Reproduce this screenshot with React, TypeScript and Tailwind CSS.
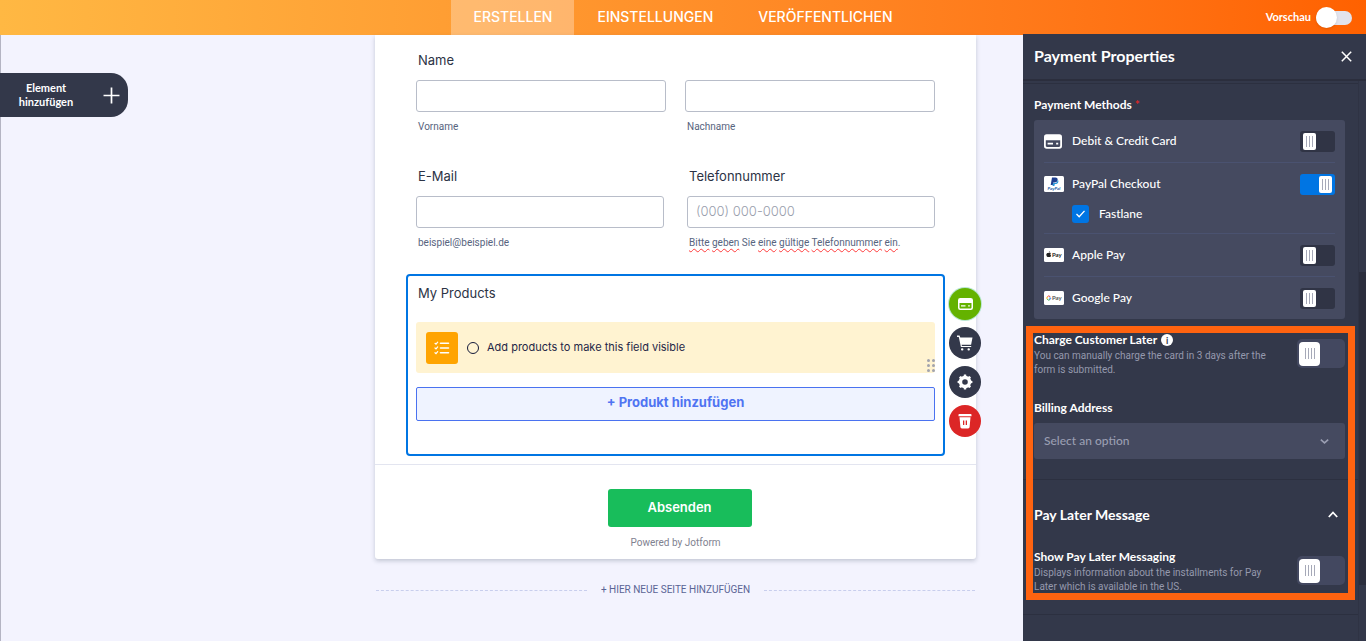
import { useState, type ReactNode } from "react";

function CardIcon({ className }: { className: string }) {
  return (
    <svg viewBox="0 0 20 16" className={className} aria-hidden="true">
      <path
        fill="currentColor"
        fillRule="evenodd"
        d="M3 0h14a3 3 0 0 1 3 3v10a3 3 0 0 1-3 3H3a3 3 0 0 1-3-3V3a3 3 0 0 1 3-3zM2 6.5v6.2c0 .7.5 1.3 1.300 1.300h13.400c.7 0 1.300-.6 1.300-1.300V6.500zM4 9.500h6v1.800H4zM13.500 9.500h2.300v1.800h-2.300z"
      />
    </svg>
  );
}

function CartIcon() {
  return (
    <svg viewBox="0 0 16 16" className="size-4" aria-hidden="true">
      <path fill="currentColor" d="M0 .5h2.500l.8 1.900H15.500l-1.400 7.300H4.600l.3 1.200h9.300v1H3.900L1.800 1.900H0z" />
      <rect x="4" y="13.200" width="2.400" height="2.200" rx="1" fill="currentColor" />
      <rect x="10.500" y="13.200" width="2.400" height="2.200" rx="1" fill="currentColor" />
    </svg>
  );
}

function GearIcon() {
  return (
    <svg viewBox="0 0 16 16" className="size-4" aria-hidden="true">
      <g fill="currentColor">
        <path
          fillRule="evenodd"
          d="M8 1.800a6.200 6.200 0 1 1 0 12.400A6.200 6.200 0 0 1 8 1.800zm0 3.400a2.800 2.800 0 1 0 0 5.600 2.800 2.800 0 0 0 0-5.600z"
        />
        {[0, 45, 90, 135, 180, 225, 270, 315].map((angle) => (
          <path key={angle} d="M6.400 3 6.900.6h2.200L9.600 3z" transform={`rotate(${angle} 8 8)`} />
        ))}
      </g>
    </svg>
  );
}

function TrashIcon() {
  return (
    <svg viewBox="0 0 14 16" className="h-4 w-[14px]" aria-hidden="true">
      <path fill="currentColor" d="M1.500 1h11c.6 0 1 .4 1 1v1.200H.5V2c0-.6.4-1 1-1z" />
      <path
        fill="currentColor"
        fillRule="evenodd"
        d="M1.500 4.200h11l-.9 9.800c-.1.800-.7 1.400-1.500 1.400H3.900c-.8 0-1.400-.6-1.500-1.400zM5 7.500v4.600h1.300V7.500zm2.700 0v4.600H9V7.500z"
      />
    </svg>
  );
}

function ChecklistIcon() {
  return (
    <svg viewBox="0 0 16 14" className="h-[14px] w-4" fill="none" stroke="currentColor" aria-hidden="true">
      <path strokeWidth="1.600" strokeLinecap="round" d="M6.500 2.300h8M6.500 7h8M6.500 11.700h8" />
      <path strokeWidth="1.200" strokeLinecap="round" d="m1 2.300 1 .9 1.700-2M1 7l1 .9 1.700-2M1 11.700l1 .9 1.700-2" />
    </svg>
  );
}

function PayPalBadge() {
  return (
    <svg viewBox="0 0 20 16" className="h-4 w-5" aria-hidden="true">
      <rect width="20" height="16" rx="1.500" fill="#fff" />
      <path fill="#1f3f8f" d="M8 1.500h3.400c1.700 0 2.500 1 2.200 2.500-.3 1.700-1.500 2.500-3.100 2.500H9.300L8.800 9H6.700z" />
      <path fill="#2997d8" d="M13.700 3.800c.7.5.8 1.300.6 2.100-.3 1.500-1.400 2.100-2.900 2.100h-.6l-.4 2.100H8.500l.7-3h1.500c1.700 0 2.800-1.200 3-3.200z" />
      <text x="10" y="14" textAnchor="middle" fontSize="4.500" fontWeight="700" fontStyle="italic" fill="#1b5ea8">
        PayPal
      </text>
    </svg>
  );
}

function ApplePayBadge() {
  return (
    <svg viewBox="0 0 20 14" className="h-[14px] w-5" aria-hidden="true">
      <rect width="20" height="14" rx="1.500" fill="#fff" />
      <path
        fill="#222"
        d="M5.200 5c.5-.3 1.200-.3 1.700.2-.8.600-.7 1.800.2 2.200-.3.900-.8 1.700-1.400 1.700-.4 0-.6-.2-1-.2s-.6.200-1 .2c-.8 0-1.500-1.600-1.400-2.700.1-1 .9-1.600 1.700-1.500.5 0 .8.300 1.200.1zM4.700 4.600c0-.8.500-1.300 1.200-1.400 0 .8-.5 1.300-1.200 1.400z"
      />
      <text x="8" y="9" fontSize="6" fontWeight="700" fill="#222">
        Pay
      </text>
    </svg>
  );
}

function GooglePayBadge() {
  return (
    <svg viewBox="0 0 20 14" className="h-[14px] w-5" aria-hidden="true">
      <rect width="20" height="14" rx="1.500" fill="#fff" />
      <g fill="none" strokeWidth="1">
        <path stroke="#ea4335" d="M6.300 5.700A2 2 0 0 0 3.200 6" />
        <path stroke="#fbbc05" d="M3.200 6a2 2 0 0 0 0 2.200" />
        <path stroke="#34a853" d="M3.200 8.200a2 2 0 0 0 2.800.4" />
        <path stroke="#4285f4" d="M6 8.600a2 2 0 0 0 .8-1.500H4.900" />
      </g>
      <text x="8" y="9" fontSize="6" fontWeight="700" fill="#555">
        Pay
      </text>
    </svg>
  );
}

function Grip({ bars }: { bars: number }) {
  return (
    <>
      {Array.from({ length: bars }, (_, i) => (
        <span key={i} className="h-[11px] w-px bg-[#a6a9b8]" />
      ))}
    </>
  );
}

function SmallSwitch({ id, defaultOn = false }: { id: string; defaultOn?: boolean }) {
  const [on, setOn] = useState(defaultOn);
  return (
    <span className={`relative flex h-[21px] w-[35px] items-center rounded-[3px] px-[3px] ${on ? "justify-end bg-[#0075e3]" : "justify-start bg-[#303445]"}`}>
      <input id={id} type="checkbox" role="switch" checked={on} onChange={() => setOn(!on)} className="absolute inset-0 cursor-pointer opacity-0" />
      <span className="flex h-[17px] w-[13px] items-center justify-center gap-[2px] rounded-[2px] bg-white">
        <Grip bars={3} />
      </span>
    </span>
  );
}

function LargeSwitch({ id }: { id: string }) {
  const [on, setOn] = useState(false);
  return (
    <span className={`relative flex h-[29px] w-[48px] shrink-0 items-center rounded-[5px] px-[2px] ${on ? "justify-end bg-[#0075e3]" : "justify-start bg-[#434860]"}`}>
      <input id={id} type="checkbox" role="switch" checked={on} onChange={() => setOn(!on)} className="absolute inset-0 cursor-pointer opacity-0" />
      <span className="flex h-6 w-[21px] items-center justify-center gap-[2px] rounded-[4px] bg-white">
        <Grip bars={4} />
      </span>
    </span>
  );
}

function MethodRow({ id, icon, label, on }: { id: string; icon: ReactNode; label: string; on?: boolean }) {
  return (
    <div>
      <div className="flex h-[42px] items-center">
        <span className="flex w-7 shrink-0 items-center">{icon}</span>
        <label htmlFor={id} className="grow text-[12px] font-medium">
          {label}
        </label>
        <SmallSwitch id={id} defaultOn={on} />
      </div>
    </div>
  );
}

function SettingRow({ id, title, text, info }: { id: string; title: string; text: string; info?: boolean }) {
  return (
    <div className="flex items-start justify-between pr-[13px] pl-[11px]">
      <div className="w-[245px]">
        <div className="flex h-4 items-center gap-1">
          <label htmlFor={id} className="text-[12px] leading-4 font-bold">
            {title}
          </label>
          {info && (
            <span className="flex size-3 items-center justify-center rounded-full bg-white text-[9px] leading-none font-bold text-[#33384a]">i</span>
          )}
        </div>
        <p className="pt-px font-['Roboto','Liberation_Sans',sans-serif] text-[10px] leading-[14px] text-[#9599ad]">{text}</p>
      </div>
      <div className="pt-[7px]">
        <LargeSwitch id={id} />
      </div>
    </div>
  );
}

function Field({ id, label, hint, placeholder }: { id: string; label?: string; hint: ReactNode; placeholder?: string }) {
  return (
    <div className="min-w-0 flex-1">
      <label htmlFor={id} className="block h-5 pl-[2px] text-[13px] leading-5 text-[#2c3345]">
        {label}
      </label>
      <input
        id={id}
        placeholder={placeholder}
        aria-label={label ?? "Nachname"}
        className="mt-[10px] block h-8 w-full rounded-[3px] border border-[#b8bdc9] bg-white px-2 pb-[3px] text-[13px] font-light text-[#2c3345] placeholder:text-[#989dac]"
      />
      <p className="mt-[7px] h-4 pl-[2px] font-['Roboto','Liberation_Sans',sans-serif] text-[10px] leading-4 text-[#57647e]">{hint}</p>
    </div>
  );
}

function Misspelt({ children }: { children: string }) {
  return <span className="underline decoration-[#ff3b3b] decoration-wavy decoration-1 underline-offset-2">{children}</span>;
}

function RoundButton({ label, className, children }: { label: string; className: string; children: ReactNode }) {
  return (
    <button type="button" aria-label={label} className={`flex size-8 items-center justify-center rounded-full text-white ${className}`}>
      {children}
    </button>
  );
}

function Header() {
  return (
    <header className="grid h-[35px] grid-cols-[1fr_auto_1fr] bg-linear-to-r from-[#ffb843] to-[#ff6100] text-white">
      <nav className="col-start-2 flex gap-px text-[14px]">
        <a href="#erstellen" className="flex items-center bg-white/30 px-[22px] pb-[2px] font-medium">ERSTELLEN</a>
        <a href="#einstellungen" className="flex items-center px-[22px] pb-[2px] font-medium">EINSTELLUNGEN</a>
        <a href="#veroeffentlichen" className="flex items-center px-[22px] pb-[2px] font-medium">VERÖFFENTLICHEN</a>
      </nav>
      <label className="flex items-center justify-end gap-[5px] pr-[14px] font-['Lato','Liberation_Sans',sans-serif] text-[11px] font-bold">
        Vorschau
        <span className="relative flex h-[21px] w-9 items-center">
          <input type="checkbox" role="switch" className="absolute inset-0 cursor-pointer opacity-0" />
          <span className="flex h-[14px] w-full items-center rounded-full bg-[#e2e3ec]">
            <span className="size-[21px] rounded-full bg-white shadow-sm" />
          </span>
        </span>
      </label>
    </header>
  );
}

function ProductsField() {
  return (
    <section className="relative -mx-[10px] mt-[23px] rounded-[4px] border-2 border-[#0075e3] px-2 pb-[33px]">
      <h2 className="mt-[7px] pl-[2px] text-[13px] leading-5 text-[#2c3345]">My Products</h2>
      <div className="relative mt-[19px] flex h-[51px] items-center rounded-[3px] bg-[#fff3d1] pl-[10px]">
        <span className="flex size-8 items-center justify-center rounded-[3px] bg-[#ffa400] text-white">
          <ChecklistIcon />
        </span>
        <label className="flex items-center text-[11px] text-[#1f2747]">
          <input type="radio" className="mr-2 ml-[9px] size-3 appearance-none rounded-full border border-[#141a3a]" />
          Add products to make this field visible
        </label>
        <svg viewBox="0 0 8 13" className="absolute right-0 bottom-[1px] h-[13px] w-2" fill="#a2a3ad" aria-hidden="true">
          <circle cx="1.500" cy="1.500" r="1.500" />
          <circle cx="6.500" cy="1.500" r="1.500" />
          <circle cx="1.500" cy="6.500" r="1.500" />
          <circle cx="6.500" cy="6.500" r="1.500" />
          <circle cx="1.500" cy="11.500" r="1.500" />
          <circle cx="6.500" cy="11.500" r="1.500" />
        </svg>
      </div>
      <button type="button" className="mt-[14px] block h-[34px] w-full rounded-[2px] border border-[#4a72f0] bg-[#eff3ff] pb-[2px] text-[13px] font-bold text-[#4f74f2]">
        + Produkt hinzufügen
      </button>
      <div className="absolute top-3 left-full ml-[6px] flex flex-col gap-[7px]">
        <RoundButton label="Payment" className="bg-[#64b200] ring-1 ring-[#b8e6d0]">
          <CardIcon className="h-3 w-[15px]" />
        </RoundButton>
        <RoundButton label="Products" className="bg-[#33384a]">
          <CartIcon />
        </RoundButton>
        <RoundButton label="Settings" className="bg-[#33384a]">
          <GearIcon />
        </RoundButton>
        <RoundButton label="Delete" className="bg-[#dc2626]">
          <TrashIcon />
        </RoundButton>
      </div>
    </section>
  );
}

function FormCanvas() {
  return (
    <main className="flex min-w-0 flex-1 items-start justify-between border-l border-[#b4b4c3] bg-[#f3f3fe] pr-[47px]">
      <button type="button" className="-ml-px mt-[38px] flex h-11 w-32 items-center justify-between rounded-r-[17px] bg-[#33384a] pr-2 pl-4 text-white">
        <span className="w-[60px] text-center font-['Lato','Liberation_Sans',sans-serif] text-[11px] leading-[14px] font-bold">Element hinzufügen</span>
        <svg viewBox="0 0 16 16" className="size-[17px]" stroke="currentColor" strokeWidth="1.600" aria-hidden="true">
          <path d="M8 .5v15M.5 8h15" />
        </svg>
      </button>
      <div className="w-full max-w-[601px]">
        <form className="rounded-b-[3px] bg-white shadow-[0_2px_4px_rgba(84,95,111,0.3)]">
          <div className="px-[41px] pt-[15px] pb-2">
            <div className="flex gap-[19px]">
              <Field id="vorname" label="Name" hint="Vorname" />
              <Field id="nachname" hint="Nachname" />
            </div>
            <div className="mt-[31px] flex gap-[23px]">
              <Field id="email" label="E-Mail" hint="beispiel@beispiel.de" />
              <Field
                id="telefon"
                label="Telefonnummer"
                placeholder="(000) 000-0000"
                hint={
                  <>
                    <Misspelt>Bitte</Misspelt> <Misspelt>geben</Misspelt> Sie <Misspelt>eine</Misspelt> <Misspelt>gültige</Misspelt>{" "}
                    <Misspelt>Telefonnummer</Misspelt> <Misspelt>ein</Misspelt>.
                  </>
                }
              />
            </div>
            <ProductsField />
          </div>
          <div className="flex flex-col items-center border-t border-[#e3e5f0] pt-6 pb-2">
            <button type="submit" className="ml-2 h-[38px] w-36 rounded-[3px] bg-[#18bd5b] text-[13px] font-semibold text-white">
              Absenden
            </button>
            <p className="mt-2 font-['Roboto','Liberation_Sans',sans-serif] text-[10px] leading-4 text-[#7f8290]">Powered by Jotform</p>
          </div>
        </form>
        <div className="mt-[23px] flex items-center gap-[14px] px-px text-[#5a6495]">
          <span className="flex-1 border-t border-dashed border-[#c8ceed]" />
          <button type="button" className="font-['Roboto','Liberation_Sans',sans-serif] text-[10px] leading-4">+ HIER NEUE SEITE HINZUFÜGEN</button>
          <span className="flex-1 border-t border-dashed border-[#c8ceed]" />
        </div>
      </div>
    </main>
  );
}

function PaymentPanel() {
  return (
    <aside className="-mt-px flex w-[343px] shrink-0 flex-col bg-[#33384a] font-['Lato','Liberation_Sans',sans-serif] text-white">
      <div className="flex h-[47px] items-center justify-between border-b-2 border-[#2b2e3d] pr-[14px] pl-[11px]">
        <h1 className="pb-[2px] text-[16px] font-bold">Payment Properties</h1>
        <button type="button" aria-label="Close">
          <svg viewBox="0 0 11 11" className="size-[11px]" stroke="currentColor" strokeWidth="1.500" aria-hidden="true">
            <path d="m.8.8 9.400 9.400M10.200.8.8 10.200" />
          </svg>
        </button>
      </div>
      <div className="flex grow">
        <div className="min-w-0 flex-1 pt-[2px]">
          <div className="border-t border-[#2c3040] pt-[13px] pr-[13px] pl-[11px]">
            <h2 className="text-[12px] leading-4 font-bold">
              Payment Methods <span className="text-[#dc2626]">*</span>
            </h2>
            <div className="mt-[7px] divide-y divide-[#4a5270] rounded-[3px] bg-[#454a60] px-[10px]">
              <MethodRow id="card" icon={<CardIcon className="h-[15px] w-[18px]" />} label="Debit & Credit Card" />
              <div>
                <MethodRow id="paypal" icon={<PayPalBadge />} label="PayPal Checkout" on />
                <label className="flex h-7 items-start pl-7 text-[12px] leading-[18px] font-medium">
                  <span className="relative mr-[10px] flex h-[18px] w-[17px] items-center justify-center rounded-[3px] bg-[#0075e3]">
                    <input type="checkbox" defaultChecked className="absolute inset-0 cursor-pointer opacity-0" />
                    <svg viewBox="0 0 12 9" className="h-2 w-[11px]" fill="none" stroke="#fff" strokeWidth="1.500" aria-hidden="true">
                      <path d="m1.500 4.500 3 3 6-6.500" />
                    </svg>
                  </span>
                  Fastlane
                </label>
              </div>
              <MethodRow id="apple" icon={<ApplePayBadge />} label="Apple Pay" />
              <MethodRow id="google" icon={<GooglePayBadge />} label="Google Pay" />
            </div>
          </div>
          <div className="relative mt-[7px] pt-[6px] pb-[6px]">
            <SettingRow id="later" title="Charge Customer Later" text="You can manually charge the card in 3 days after the form is submitted." info />
            <div className="mt-[23px] pr-[13px] pb-5 pl-[11px]">
              <label htmlFor="billing" className="block text-[12px] leading-4 font-bold">
                Billing Address
              </label>
              <div className="relative mt-[7px]">
                <select id="billing" className="block h-9 w-full appearance-none rounded-[3px] bg-[#454a60] px-[10px] text-[12px] font-medium text-[#9a9eb2]">
                  <option>Select an option</option>
                </select>
                <svg viewBox="0 0 9 5" className="pointer-events-none absolute top-4 right-4 h-[5px] w-[9px]" fill="none" stroke="#9a9eb2" strokeWidth="1.600" aria-hidden="true">
                  <path d="m.8.6 3.700 3.300L8.200.6" />
                </svg>
              </div>
            </div>
            <button type="button" className="flex h-[70px] w-full items-center justify-between border-t border-[#2c3040] pr-[20px] pl-[11px]">
              <span className="text-[14px] font-bold">Pay Later Message</span>
              <svg viewBox="0 0 10 7" className="h-[7px] w-[10px]" fill="none" stroke="currentColor" strokeWidth="1.800" aria-hidden="true">
                <path d="M.8 6 5 1.500 9.200 6" />
              </svg>
            </button>
            <SettingRow id="message" title="Show Pay Later Messaging" text="Displays information about the installments for Pay Later which is available in the US." />
            <div className="pointer-events-none absolute inset-y-0 right-[3px] left-[3px] border-[7px] border-[#ff6310]" />
          </div>
          <div className="mt-[14px] border-t border-[#2c3040]" />
        </div>
        <div className="flex w-2 flex-col border-l border-[#2f3344]">
          <div className="mt-[191px] h-[313px] bg-[#2b2e3d]" />
        </div>
      </div>
    </aside>
  );
}

export default function App() {
  return (
    <div className="flex min-h-screen flex-col bg-[#f3f3fe] font-['Inter','Liberation_Sans',sans-serif]">
      <Header />
      <div className="flex grow">
        <FormCanvas />
        <PaymentPanel />
      </div>
    </div>
  );
}
